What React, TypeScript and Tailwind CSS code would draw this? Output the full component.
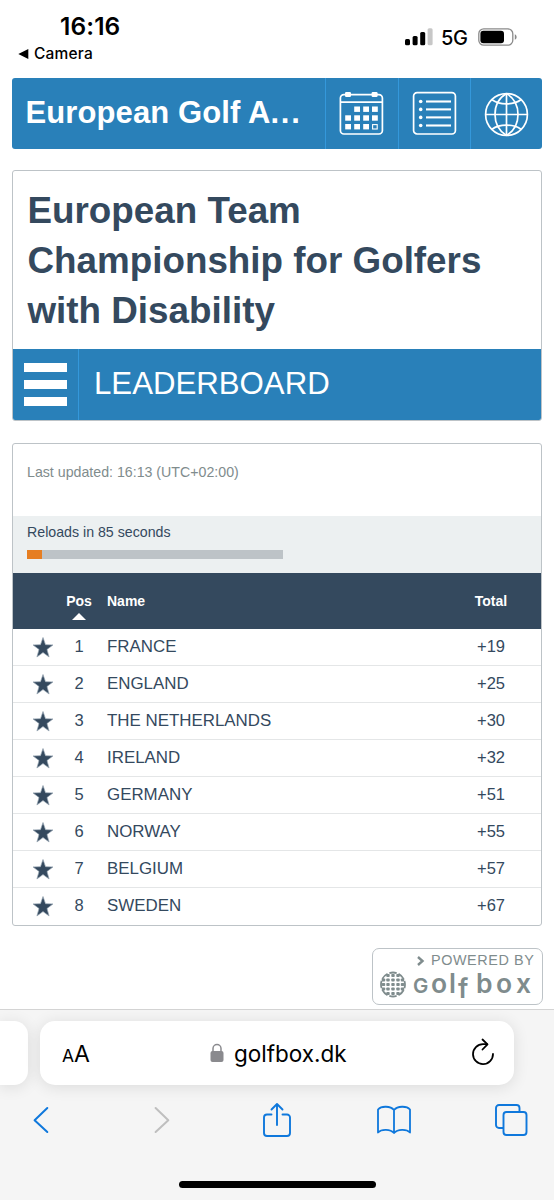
const teams = [
  { pos: 1, name: 'FRANCE', total: '+19' },
  { pos: 2, name: 'ENGLAND', total: '+25' },
  { pos: 3, name: 'THE NETHERLANDS', total: '+30' },
  { pos: 4, name: 'IRELAND', total: '+32' },
  { pos: 5, name: 'GERMANY', total: '+51' },
  { pos: 6, name: 'NORWAY', total: '+55' },
  { pos: 7, name: 'BELGIUM', total: '+57' },
  { pos: 8, name: 'SWEDEN', total: '+67' },
];

function StatusBar() {
  return (
    <div className="flex h-[78px] justify-between font-['Inter',sans-serif] text-black">
      <div className="flex flex-col pl-[18px] pt-3">
        <div className="pl-[42px] text-[24.5px] leading-[29px] font-semibold tracking-[0.1px]">16:16</div>
        <div className="mt-[3px] flex items-center gap-[5px] text-[15.5px] leading-5 font-medium tracking-[0.2px]">
          <svg width="11" height="10" viewBox="0 0 11 10">
            <path d="M0.3 5 10.3 0v10z" />
          </svg>
          Camera
        </div>
      </div>
      <div className="flex h-[74px] items-center pr-[37px]">
        <svg width="28" height="18" viewBox="0 0 28 18">
          <rect x="0" y="11" width="5" height="6.3" rx="1.5" />
          <rect x="7.6" y="8" width="5" height="9.3" rx="1.5" />
          <rect x="15.2" y="4" width="5" height="13.3" rx="1.5" />
          <rect x="22.6" y="0.2" width="5" height="17.1" rx="1.5" fill="#c7c7c7" />
        </svg>
        <span className="ml-[8px] w-[37px] pt-[2px] text-[20px] leading-6 font-medium tracking-[-0.3px]">5G</span>
        <svg width="39" height="18" viewBox="0 0 39 18">
          <rect x="0.8" y="0.8" width="34" height="16.4" rx="5" fill="none" stroke="#8a8a8a" strokeWidth="1.3" />
          <rect x="2.4" y="2.8" width="23.6" height="12.4" rx="3" />
          <path d="M36.8 6.2c2.4.8 2.4 4.8 0 5.6z" fill="#8a8a8a" />
        </svg>
      </div>
    </div>
  );
}

function CalendarIcon() {
  const cells = [
    [15.2, 15.5], [24.2, 15.5], [33, 15.5],
    [6.2, 24.3], [15.2, 24.3], [24.2, 24.3], [33, 24.3],
    [6.2, 33], [15.2, 33], [24.2, 33],
  ];
  return (
    <svg width="45" height="45" viewBox="0 0 45 45" fill="none" stroke="#fff" strokeWidth="1.7">
      <rect x="1.4" y="3.6" width="42" height="39.4" rx="3.5" />
      <path d="M1.4 11.2h42" />
      <rect x="6" y="1" width="6" height="5" rx="1.2" fill="#fff" stroke="none" />
      <rect x="32.6" y="1" width="6" height="5" rx="1.2" fill="#fff" stroke="none" />
      {cells.map(([x, y]) => (
        <rect key={`${x}-${y}`} x={x} y={y} width="5.8" height="5.4" fill="#fff" stroke="none" />
      ))}
      <rect x="33.6" y="33.6" width="4.6" height="4.4" strokeWidth="1.1" />
    </svg>
  );
}

function ListIcon() {
  return (
    <svg width="45" height="45" viewBox="0 0 45 45" fill="none" stroke="#fff" strokeWidth="1.7">
      <rect x="1.6" y="1.6" width="41.8" height="41.4" rx="3.5" />
      {[10.5, 18.4, 26.4, 34.5].map((y) => (
        <g key={y}>
          <circle cx="8.7" cy={y} r="1.8" fill="#fff" stroke="none" />
          <path d={`M14 ${y}h25`} strokeWidth="2.1" />
        </g>
      ))}
    </svg>
  );
}

function GlobeIcon() {
  return (
    <svg width="45" height="45" viewBox="0 0 45 45" fill="none" stroke="#fff" strokeWidth="1.7">
      <circle cx="22.5" cy="22.5" r="20.9" />
      <path d="M22.5 1.6v41.8M1.6 22.5h41.8" />
      <path d="M22.5 1.6C15 6 11 13 11 22.5S15 39 22.5 43.4M22.5 1.6C30 6 34 13 34 22.5S30 39 22.5 43.4" />
      <path d="M8 7.8c7.5 5.4 21.5 5.4 29 0M8 37.2c7.5-5.4 21.5-5.4 29 0" />
    </svg>
  );
}

function SiteHeader() {
  return (
    <header className="ml-[11.5px] mr-[12px] flex h-[71px] rounded-[3px] bg-[#2980b9] text-white">
      <div className="flex flex-1 items-center pl-[14px] text-[31px] font-bold tracking-[0.1px] whitespace-nowrap">
        European Golf A<span className="tracking-[1.8px]">...</span>
      </div>
      <div className="flex w-[72.5px] items-center justify-center border-l border-[#3498db]"><CalendarIcon /></div>
      <div className="flex w-[72.5px] items-center justify-center border-l border-[#3498db]"><ListIcon /></div>
      <div className="flex w-[72px] items-center justify-center border-l border-[#3498db] pt-[2px]"><GlobeIcon /></div>
    </header>
  );
}

function EventCard() {
  return (
    <section className="mx-[12px] mt-[21px] h-[251px] overflow-hidden rounded-[3px] border border-[#bdc3c7] bg-white">
      <h1 className="h-[178px] pl-[14.5px] pt-[15px] text-[36.8px] leading-[50px] font-bold text-[#34495e]">
        European Team<br />Championship for Golfers<br />with Disability
      </h1>
      <div className="flex h-[71px] bg-[#2980b9] text-white">
        <div className="flex w-[66px] flex-col gap-2 border-r border-[#3498db] pl-[11px] pt-[14px]">
          <div className="h-[9px] w-[43px] bg-white" />
          <div className="h-[9px] w-[43px] bg-white" />
          <div className="h-[9px] w-[43px] bg-white" />
        </div>
        <div className="flex items-center pl-[15px] text-[31.2px]">LEADERBOARD</div>
      </div>
    </section>
  );
}

function Star() {
  return (
    <svg width="22" height="21" viewBox="0 0 22 21">
      <path d="M11 .5 13.5 7.7 21 7.9 15 12.5 17.1 20 11 15.6 4.9 20 7 12.5 1 7.9 8.5 7.7Z" fill="#34495e" stroke="#9aa8b5" strokeWidth=".7" />
    </svg>
  );
}

function Leaderboard() {
  return (
    <section className="mx-[12px] mt-[22px] h-[483px] overflow-hidden rounded-[3px] border border-[#bdc3c7] bg-white text-[#34495e]">
      <div className="h-[72px] pl-[14px] pt-[18px] text-[14.2px] leading-5 text-[#7f8c8d]">Last updated: 16:13 (UTC+02:00)</div>
      <div className="h-[57px] bg-[#ecf0f1] pl-[14px] pt-[6px]">
        <div className="text-[14.2px] leading-5">Reloads in 85 seconds</div>
        <div className="mt-[8px] flex h-[9px] w-[256px] bg-[#bdc3c7]">
          <div className="w-[14.5px] bg-[#e67e22]" />
        </div>
      </div>
      <div className="grid h-[56px] grid-cols-[53px_26px_1fr_60px_20px] bg-[#34495e] text-[14px] font-bold text-white">
        <span />
        <span className="flex flex-col items-center pt-[18px] leading-5">
          Pos
          <svg className="mt-[2px]" width="14" height="7" viewBox="0 0 14 7"><path d="M7 0l7 7H0z" fill="#fff" /></svg>
        </span>
        <span className="pl-[15px] pt-[18px] leading-5">Name</span>
        <span className="pt-[18px] text-center leading-5">Total</span>
      </div>
      {teams.map((team) => (
        <div key={team.pos} className="grid h-[37px] grid-cols-[53px_26px_1fr_60px_20px] border-b border-[#e4e6e7] text-[16.9px] leading-[34px] last:border-b-0">
          <span className="pl-[19px] pt-[8px]"><Star /></span>
          <span className="text-center text-[16.5px]">{team.pos}</span>
          <span className="pt-px pl-[15px]">{team.name}</span>
          <span className="text-center text-[16.5px]">{team.total}</span>
        </div>
      ))}
    </section>
  );
}

function PoweredBy() {
  return (
    <div className="ml-[372px] mt-[22px] h-[57px] w-[170.5px] rounded-[7px] border-[1.5px] border-[#bdc3c7] text-[#7f8c8d]">
      <div className="flex h-[23px] items-center justify-end gap-[6px] pr-[7px] pt-px text-[14.4px] tracking-[0.6px]">
        <svg width="8" height="10" viewBox="0 0 8 10" fill="none" stroke="#7f8c8d" strokeWidth="2.4"><path d="M1 1l4.5 4L1 9" /></svg>
        <span className="whitespace-nowrap">POWERED BY</span>
      </div>
      <div className="flex h-[25px] items-center pl-[6px]">
        <svg width="28" height="28" viewBox="0 0 28 28" fill="none" stroke="#7f8c8d">
          <circle cx="14" cy="13.5" r="12" strokeDasharray="7.4 1.97" strokeDashoffset="3.7" strokeWidth="1.8" />
          {[4.5, 9, 14, 19, 23.5].map((x) =>
            [4.5, 9, 13.5, 18, 22.5].map((y) => {
              const distance = Math.hypot(x - 14, y - 13.5);
              return distance < 11.5 ? (
                <rect key={`${x}-${y}`} x={x - 1.7} y={y - 1.6} width="3.4" height="3.2" rx="0.8" fill="#7f8c8d" stroke="none" />
              ) : null;
            }),
          )}
        </svg>
        <div className="ml-[6px] flex items-baseline font-['Inter',sans-serif] text-[26.5px] leading-[26px] font-semibold">
          <span className="w-[18px] text-[20.5px]">G</span>
          <span className="w-[18px]">o</span>
          <span className="w-[9px]">l</span>
          <span className="w-[18px] translate-y-[5px]">f</span>
          <span className="w-[20px]">b</span>
          <span className="w-[20px]">o</span>
          <span>x</span>
        </div>
      </div>
    </div>
  );
}

function BrowserChrome() {
  return (
    <footer className="mt-[4px] flex h-[191px] flex-col border-t border-[#d4d4d4] bg-[#f5f5f5] font-['Inter',sans-serif]">
      <div className="mt-[11px] flex h-[64px] gap-3">
        <div className="w-[28px] rounded-r-[14px] bg-white shadow-[0_2px_16px_rgba(0,0,0,0.11)]" />
        <div className="flex w-[474px] items-center rounded-[15px] bg-white shadow-[0_2px_16px_rgba(0,0,0,0.11)]">
          <div className="flex w-[170px] items-baseline pt-[3px] pl-[22px] leading-8 text-black">
            <span className="text-[17.5px]">A</span>
            <span className="text-[23px]">A</span>
          </div>
          <svg width="14" height="20" viewBox="0 0 14 20">
            <rect x="0.5" y="8" width="13" height="11" rx="2" fill="#8a8a8e" />
            <path d="M3 9V5.5a4 4 0 0 1 8 0V9" fill="none" stroke="#8a8a8e" strokeWidth="1.5" />
          </svg>
          <span className="ml-[10px] w-[236px] pt-[2px] text-[22.5px] text-black">golfbox.dk</span>
          <svg className="-mt-[3px]" width="26" height="28" viewBox="0 0 26 28" fill="none" stroke="#000" strokeWidth="1.8" strokeLinecap="round" strokeLinejoin="round">
            <path d="M17 6.1H13A10 10 0 1 0 23 16" />
            <path d="M12.5 1.5 17.5 6.3 12.5 11.5" />
          </svg>
        </div>
      </div>
      <div className="mt-[15px] flex h-[40px] items-center text-[#0f78dc]">
        <svg className="ml-[33px]" width="16" height="28" viewBox="0 0 16 28" fill="none" stroke="currentColor" strokeWidth="2" strokeLinecap="round" strokeLinejoin="round"><path d="M14.3 2 1.6 14.2 14.3 26" /></svg>
        <svg className="ml-[105px]" width="16" height="28" viewBox="0 0 16 28" fill="none" stroke="#bfbfbf" strokeWidth="2" strokeLinecap="round" strokeLinejoin="round"><path d="M1.6 2 14.3 14.2 1.6 26" /></svg>
        <svg className="ml-[92px]" width="30" height="36" viewBox="0 0 30 36" fill="none" stroke="currentColor" strokeWidth="1.9" strokeLinecap="round" strokeLinejoin="round">
          <path d="M9.5 12.5H5a3 3 0 0 0-3 3V31a3 3 0 0 0 3 3h20a3 3 0 0 0 3-3V15.5a3 3 0 0 0-3-3h-4.5M15 23V2M9.5 7.5 15 2l5.5 5.5" />
        </svg>
        <svg className="ml-[84px]" width="36" height="30" viewBox="0 0 36 30" fill="none" stroke="currentColor" strokeWidth="1.8" strokeLinejoin="round">
          <path d="M18 28V5C14.5 1 5.5.5 2 4.5v23c3.5-3.8 12.5-3.5 16 .5 3.5-4 12.5-4.3 16-.5v-23C30.5.5 21.5 1 18 5" />
        </svg>
        <svg className="ml-[82px]" width="34" height="34" viewBox="0 0 34 34" fill="none" stroke="currentColor" strokeWidth="1.9">
          <path d="M9 25H5a3 3 0 0 1-3-3V5a3 3 0 0 1 3-3h17.5a3 3 0 0 1 3 3v4" />
          <rect x="9.5" y="9" width="23" height="23" rx="3" />
        </svg>
      </div>
      <div className="mt-[41px] ml-[179px] h-[7px] w-[197px] rounded-full bg-black" />
    </footer>
  );
}

export default function App() {
  return (
    <main className="h-[1200px] w-[554px] overflow-hidden bg-white font-['Liberation_Sans',Arial,sans-serif]">
      <StatusBar />
      <SiteHeader />
      <EventCard />
      <Leaderboard />
      <PoweredBy />
      <BrowserChrome />
    </main>
  );
}
